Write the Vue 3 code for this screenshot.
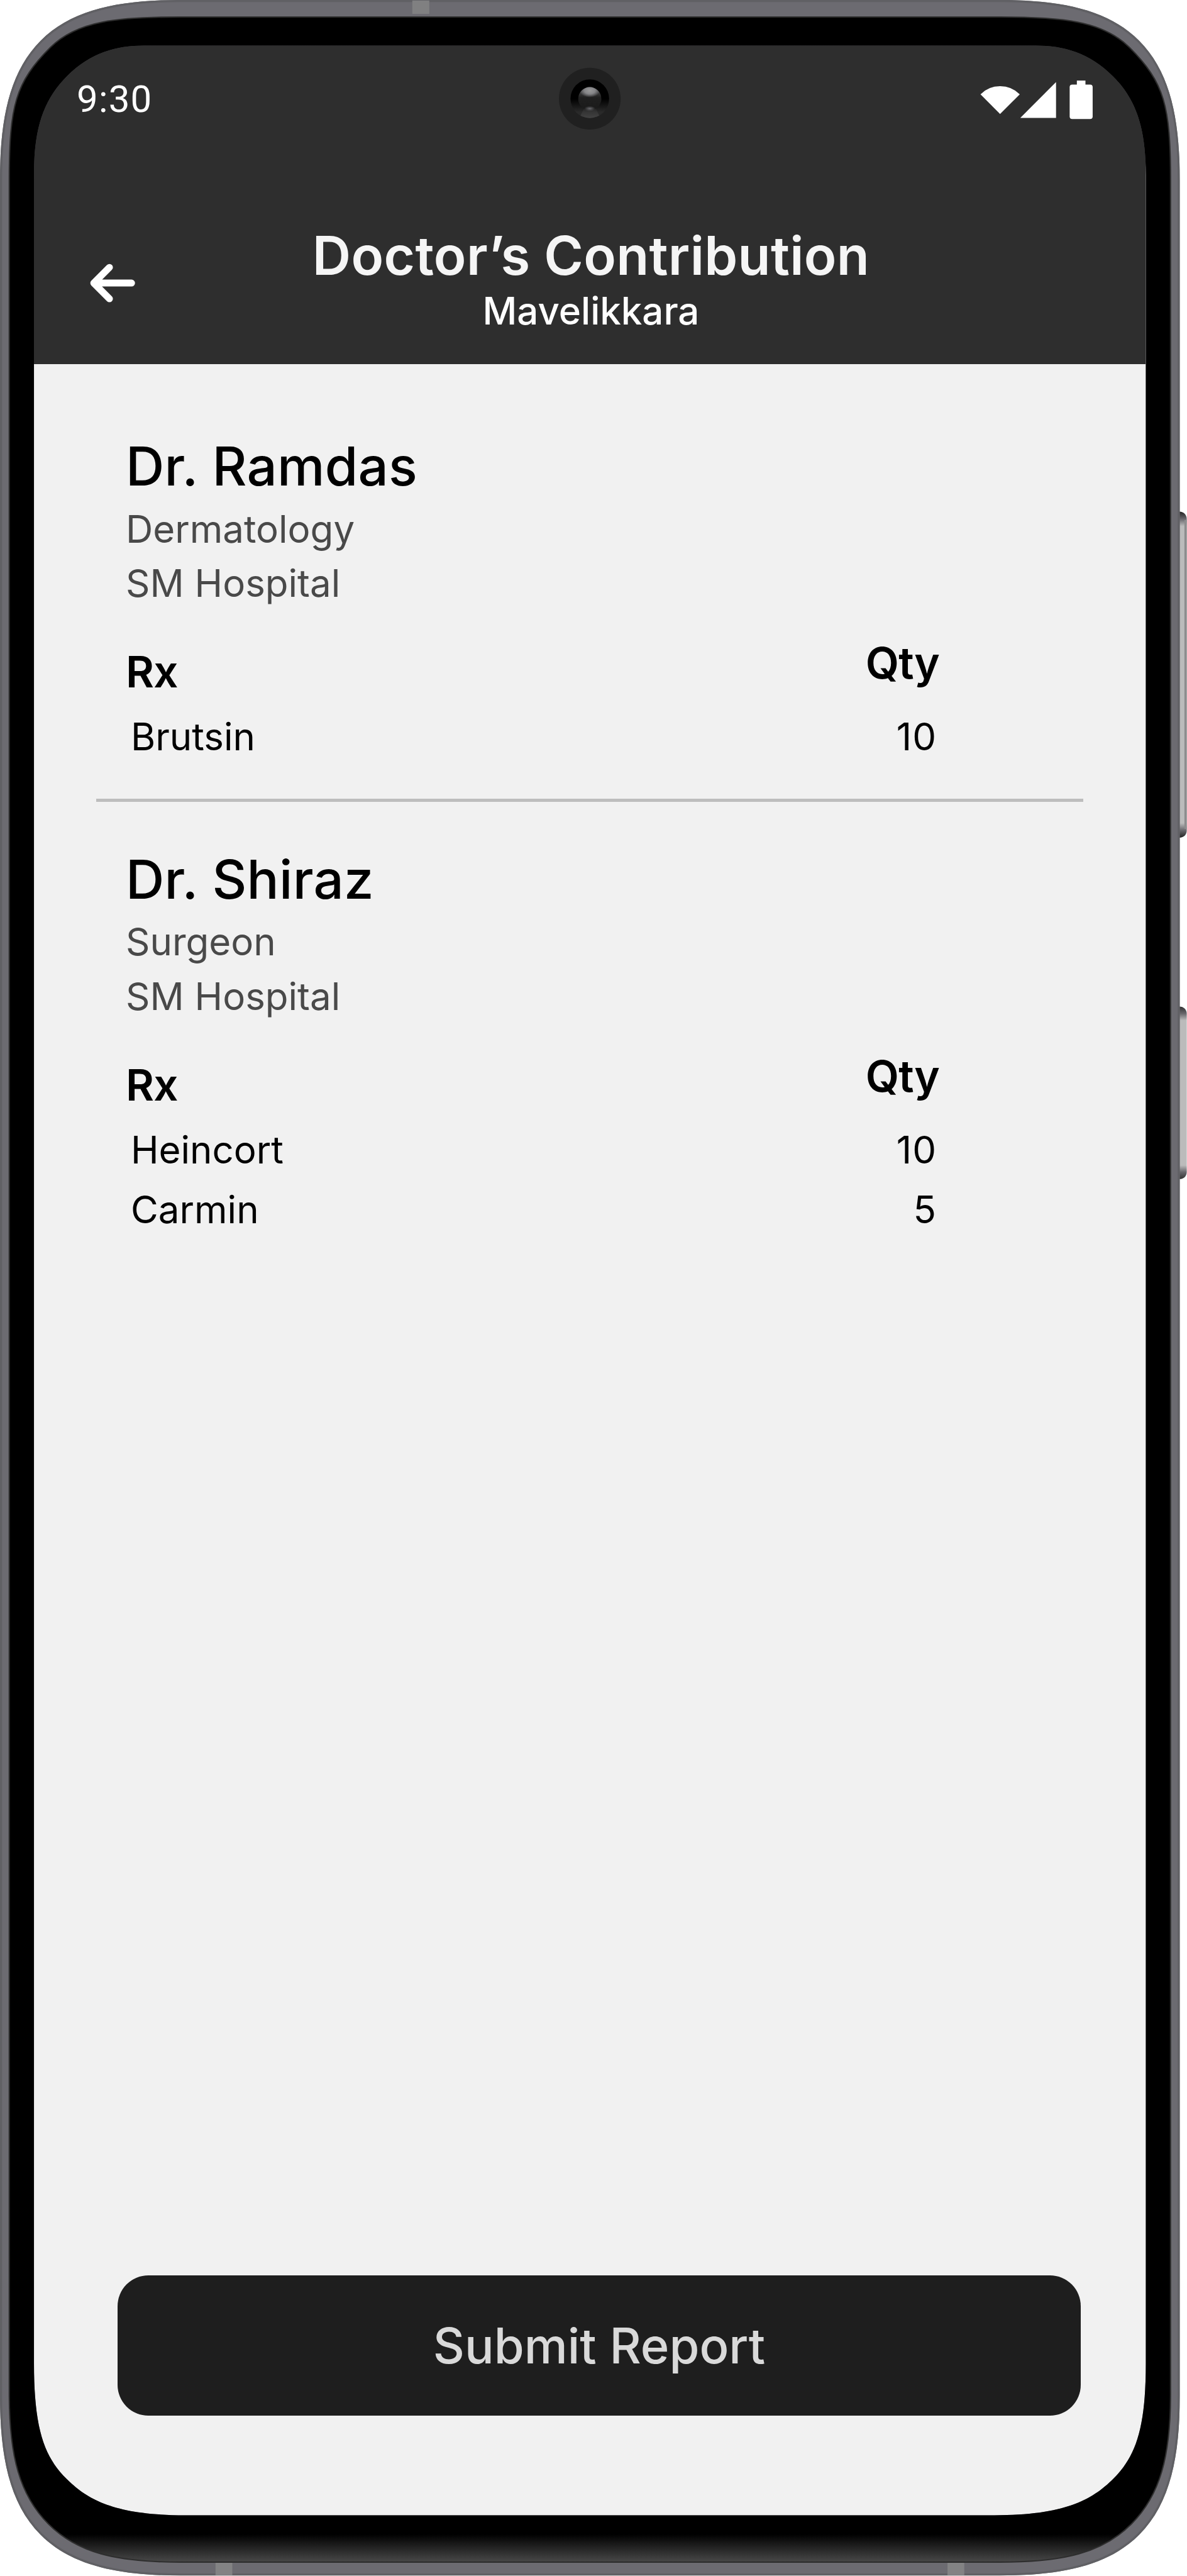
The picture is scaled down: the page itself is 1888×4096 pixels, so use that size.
<template>
  <div class="phone">
    <div class="screen">
      <div class="status-bar">
        <span class="time">9:30</span>
        <svg class="status-icons" viewBox="1904 151 220 86" fill="#fff">
          <path d="M1942.7 221 L1904.7 182.7 Q1920.5 167 1942.7 167 Q1965 167 1981 182.7 Z" />
          <path d="M1982 228.5 H2051.5 V159 Z" />
          <rect x="2078" y="163.7" width="44.7" height="67" rx="5" />
          <rect x="2092" y="156" width="16.7" height="10" />
        </svg>
      </div>

      <header class="app-bar">
        <svg class="back" viewBox="0 0 88 76" fill="none" stroke="#fff" stroke-width="13.4" stroke-linecap="round" stroke-linejoin="round">
          <path d="M81 38 H8 M38 7.5 L7.5 38 L38 68.5" />
        </svg>
        <div class="heading">
          <h1>Doctor’s Contribution</h1>
          <p>{{ place }}</p>
        </div>
      </header>

      <main class="content">
        <section v-for="doctor in doctors" :key="doctor.name" class="doctor">
          <h2>{{ doctor.name }}</h2>
          <p class="detail">{{ doctor.speciality }}</p>
          <p class="detail">{{ doctor.hospital }}</p>
          <div class="table-head">
            <span>Rx</span>
            <span class="qty">Qty</span>
          </div>
          <div v-for="item in doctor.items" :key="item.rx" class="table-row">
            <span>{{ item.rx }}</span>
            <span class="count">{{ item.qty }}</span>
          </div>
        </section>
      </main>

      <button class="submit" type="button">Submit Report</button>
    </div>

    <!-- device body, drawn over the edges of the screen -->
    <svg class="shell" viewBox="0 0 2306 5003" preserveAspectRatio="none">
      <defs>
        <linearGradient id="chin" gradientUnits="userSpaceOnUse" x1="0" y1="4922" x2="0" y2="4977">
          <stop offset="0" stop-color="#000" />
          <stop offset="1" stop-color="#4a4a4a" />
        </linearGradient>
        <linearGradient id="key" x1="0" y1="0" x2="0" y2="1">
          <stop offset="0" stop-color="#222" />
          <stop offset="0.022" stop-color="#66656a" />
          <stop offset="0.045" stop-color="#bbb" />
          <stop offset="0.955" stop-color="#bbb" />
          <stop offset="0.978" stop-color="#66656a" />
          <stop offset="1" stop-color="#222" />
        </linearGradient>
        <linearGradient id="keySmall" x1="0" y1="0" x2="0" y2="1">
          <stop offset="0" stop-color="#333" />
          <stop offset="0.04" stop-color="#66656a" />
          <stop offset="0.08" stop-color="#bbb" />
          <stop offset="0.92" stop-color="#bbb" />
          <stop offset="0.96" stop-color="#66656a" />
          <stop offset="1" stop-color="#333" />
        </linearGradient>
        <linearGradient id="ring" x1="0" y1="0" x2="0" y2="1">
          <stop offset="0.5" stop-color="#000" />
          <stop offset="0.85" stop-color="#2a2a2a" />
        </linearGradient>
        <radialGradient id="shine">
          <stop offset="0" stop-color="#999" />
          <stop offset="0.5" stop-color="#858588" />
          <stop offset="1" stop-color="#858588" stop-opacity="0" />
        </radialGradient>
        <radialGradient id="glow">
          <stop offset="0" stop-color="#6a6a6e" />
          <stop offset="1" stop-color="#6a6a6e" stop-opacity="0" />
        </radialGradient>
        <linearGradient id="lens" x1="0" y1="0" x2="0" y2="1">
          <stop offset="0" stop-color="#5a5a5c" />
          <stop offset="0.45" stop-color="#1f1f1f" />
          <stop offset="1" stop-color="#1a1a1a" />
        </linearGradient>
        <linearGradient id="beam" x1="0" y1="0" x2="0" y2="1">
          <stop offset="0.2" stop-color="#404040" stop-opacity="0" />
          <stop offset="1" stop-color="#464646" />
        </linearGradient>
        <clipPath id="ringClip"><circle cx="1145.8" cy="191.7" r="37.5" /></clipPath>
        <clipPath id="lensClip"><circle cx="1145.8" cy="191.7" r="22.5" /></clipPath>
        <clipPath id="bodyClip"><path :d="outer" /></clipPath>
      </defs>

      <path d="M2291 993.5 C2300 993.5 2305.5 1000 2305.5 1008 V1613 C2305.5 1621 2300 1627 2291 1627 Z" fill="url(#key)" />
      <rect x="2301" y="1010" width="4.5" height="600" fill="#8c8c8d" />
      <path d="M2291 1955 C2300 1955 2305.5 1961 2305.5 1969 V2276 C2305.5 2284 2300 2290 2291 2290 Z" fill="url(#keySmall)" />

      <path :d="outer + screenHole" fill="#6c6b71" fill-rule="evenodd" />
      <path :d="outer" fill="none" stroke="#606064" stroke-width="8" clip-path="url(#bodyClip)" />
      <rect x="801" y="1" width="33" height="26" fill="#808081" />
      <rect x="418.7" y="4977" width="32.6" height="24.5" fill="#838384" />
      <rect x="1840.7" y="4977" width="32.6" height="24.5" fill="#838384" />
      <path :d="bezel + screenHole" fill="url(#chin)" fill-rule="evenodd" />
      <path :d="bezel" fill="none" stroke="#2e2e2e" stroke-width="2.5" />

      <!-- camera -->
      <circle cx="1145.8" cy="191.7" r="60" fill="#202020" />
      <circle cx="1145.8" cy="191.7" r="37.5" fill="url(#ring)" />
      <path d="M1140 200 H1152 L1168 232 H1124 Z" fill="url(#beam)" clip-path="url(#ringClip)" />
      <circle cx="1145.8" cy="191.7" r="22.5" fill="url(#lens)" />
      <ellipse cx="1145.8" cy="176" rx="20" ry="13" fill="url(#shine)" clip-path="url(#lensClip)" />
      <ellipse cx="1145.8" cy="211" rx="11" ry="5" fill="url(#glow)" />
    </svg>
  </div>
</template>

<script setup>
import { ref } from 'vue';

const place = ref('Mavelikkara');

const doctors = ref([
  {
    name: 'Dr. Ramdas',
    speciality: 'Dermatology',
    hospital: 'SM Hospital',
    items: [{ rx: 'Brutsin', qty: 10 }]
  },
  {
    name: 'Dr. Shiraz',
    speciality: 'Surgeon',
    hospital: 'SM Hospital',
    items: [
      { rx: 'Heincort', qty: 10 },
      { rx: 'Carmin', qty: 5 }
    ]
  }
]);

const outer =
  'M0 350 C0 235 17 141 79 79 C141 17 235 0 350 0 H1942 C2057 0 2151 17 2213 79 C2275 141 2292 235 2292 350 ' +
  'V4652 C2292 4767 2275 4861 2213 4923 C2151 4985 2057 5002 1942 5002 H350 C235 5002 141 4985 79 4923 C17 4861 0 4767 0 4652 Z ';

const bezel =
  'M18 350 C18 205 30 160 98 92 C150 40 230 33 350 33 H1942 C2062 33 2142 40 2194 92 C2262 160 2274 205 2274 350 ' +
  'V4650 C2274 4770 2254 4846 2198 4902 C2142 4958 2067 4976 1942 4976 H350 C225 4976 150 4958 94 4902 C38 4846 18 4770 18 4650 Z ';

const screenHole =
  'M66 340 C66 250 84 194 130 148 C176 102 226 88.5 280 88.5 H2012 C2066 88.5 2116 102 2162 148 C2208 194 2226 250 2226 340 ' +
  'V4590 C2226 4720 2205 4772 2163 4814 C2121 4856 2067 4885 1932 4885 H360 C225 4885 171 4856 129 4814 C87 4772 66 4720 66 4590 Z ';
</script>

<style>
body {
  margin: 0;
  background: #fff;
}
</style>

<style scoped>
.phone {
  position: relative;
  box-sizing: border-box;
  width: 1888px;
  height: 4096px;
  padding: 72px 66px 96px 54px;
  overflow: hidden;
  font-family: Inter, "Liberation Sans", sans-serif;
}

.screen {
  display: flex;
  flex-direction: column;
  height: 3928px;
  overflow: hidden;
  border-radius: 80px;
  background: #f1f1f1;
}

.shell {
  position: absolute;
  top: 0;
  left: 0;
  width: 1888px;
  height: 4096px;
  pointer-events: none;
}

.status-bar {
  display: flex;
  align-items: center;
  justify-content: space-between;
  height: 174px;
  padding: 0 83px 0 68px;
  background: #2e2e2e;
  color: #fff;
}

.time {
  margin-top: -3px;
  font-family: Roboto, sans-serif;
  font-size: 60px;
  letter-spacing: 1.2px;
}

.status-icons {
  width: 180px;
  height: 70.4px;
}

.app-bar {
  display: grid;
  grid-template-columns: 1fr;
  height: 333px;
  background: #2e2e2e;
  color: #fff;
}

.back {
  grid-area: 1 / 1;
  width: 72px;
  height: 62.2px;
  margin: 173px 0 0 88.5px;
}

.heading {
  grid-area: 1 / 1;
  padding: 110px 0 0 4px;
  text-align: center;
}

h1,
h2,
p {
  margin: 0;
}

h1 {
  font-size: 85px;
  font-weight: 600;
  line-height: 102px;
  letter-spacing: 0.3px;
  color: #f5f5f5;
}

.heading p {
  font-size: 60px;
  font-weight: 500;
  line-height: 72px;
}

.content {
  flex: 1;
  padding: 0 99px;
}

.doctor {
  height: 578.9px;
  padding: 73px 229px 0 47px;
  color: #000;
}

.doctor:first-child {
  padding-top: 111.9px;
  border-bottom: 5px solid #bdbdbd;
}

h2 {
  font-size: 85px;
  font-weight: 500;
  line-height: 102px;
  letter-spacing: 0.25px;
  margin-bottom: 4.7px;
}

.detail {
  font-size: 60px;
  line-height: 86.4px;
  color: #494949;
}

.table-head {
  display: flex;
  justify-content: space-between;
  margin: 55.6px 0 14.3px;
  font-size: 69px;
  font-weight: 600;
  line-height: 84px;
  letter-spacing: -0.8px;
}

.qty {
  margin-top: -13.6px;
}

.table-row {
  display: flex;
  justify-content: space-between;
  padding: 0 4px 0 8px;
  font-size: 60px;
  line-height: 94.5px;
}

.count {
  letter-spacing: 1px;
}

.submit {
  width: 1532px;
  height: 223.4px;
  margin: 0 0 158.6px 133px;
  border: 0;
  border-radius: 49px;
  background: #1e1e1e;
  color: #d9d9d9;
  font-family: inherit;
  font-size: 77.7px;
  font-weight: 500;
}
</style>
